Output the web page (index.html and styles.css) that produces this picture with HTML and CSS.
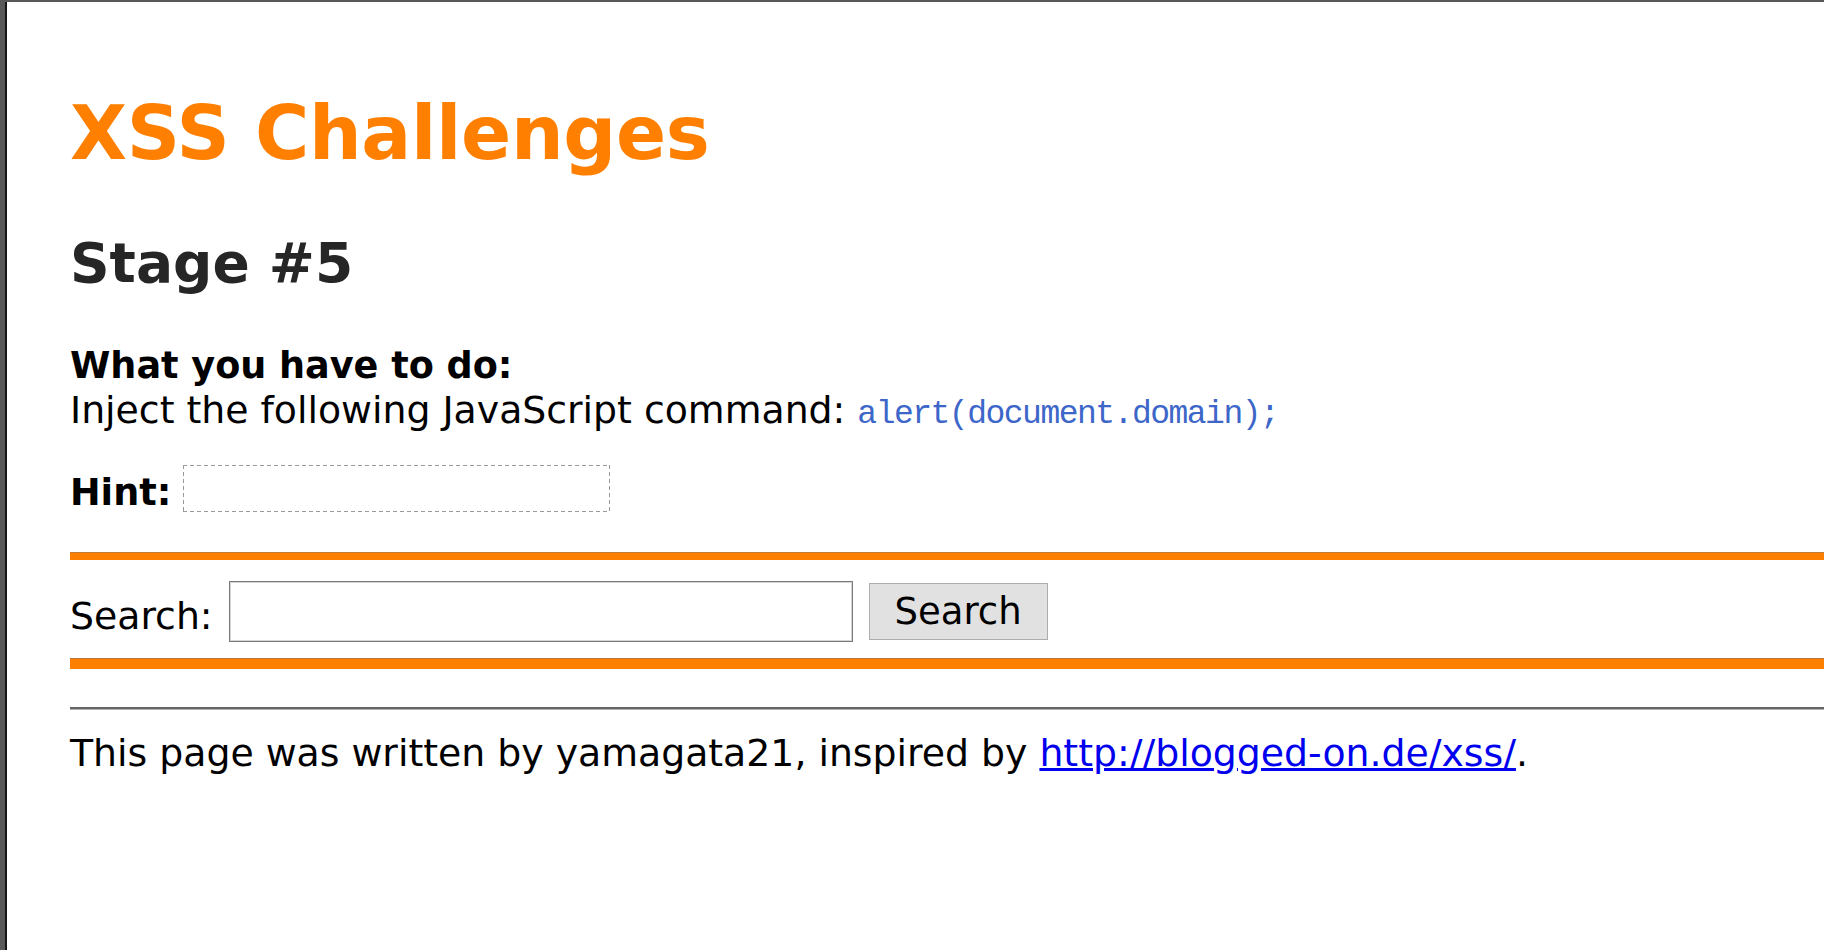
FILE: index.html
```html
<!DOCTYPE html>
<html lang="en">
<head>
<meta charset="utf-8">
<title>XSS Challenges - Stage #5</title>
<link rel="stylesheet" href="styles.css">
</head>
<body>
<div class="frame">
  <div class="page">
    <h1 class="title">XSS Challenges</h1>
    <h2 class="stage">Stage #5</h2>
    <div class="task">
      <div class="task-head">What you have to do:</div>
      <div class="task-body">Inject the following JavaScript command: <code class="cmd">alert(document.domain);</code></div>
    </div>
    <div class="hint-row">
      <span class="hint-label">Hint:</span>
      <span class="hint-box"></span>
    </div>
    <div class="rule-top"></div>
    <form class="search-row">
      <label class="search-label" for="q">Search:</label>
      <input class="search-input" id="q" type="text">
      <button class="search-btn" type="button">Search</button>
    </form>
    <div class="rule-bottom"></div>
    <div class="hr"></div>
    <p class="footer">This page was written by yamagata21, inspired by <a class="link" href="#">http://blogged-on.de/xss/</a>.</p>
  </div>
</div>
</body>
</html>
```
FILE: styles.css
```css
html, body {
  margin: 0;
  padding: 0;
  background: #ffffff;
}

body {
  font-family: "DejaVu Sans", Verdana, sans-serif;
  font-size: 37.8px;
  color: #000;
  overflow: hidden;
  height: 950px;
}

.frame {
  border-top: 2px solid #585858;
  border-left: 5px solid #585858;
  height: 950px;
  box-sizing: border-box;
}

.page {
  display: flow-root;
  border-left: 2px solid #161616;
  padding-left: 63px;
  height: 100%;
  box-sizing: border-box;
}

.title {
  margin: 88px 0 0;
  font-size: 74px;
  line-height: 86px;
  font-weight: bold;
  color: #ff7f00;
  letter-spacing: -0.3px;
}

.stage {
  margin: 55px 0 0;
  font-size: 55px;
  line-height: 64px;
  font-weight: bold;
  color: #262626;
}

.task {
  margin-top: 48px;
  line-height: 45px;
}

.task-head {
  font-weight: bold;
  font-size: 36.6px;
}

.cmd {
  font-family: "Liberation Mono", "DejaVu Sans Mono", monospace;
  font-size: 33px;
  letter-spacing: -1.5px;
  color: #3d66c9;
}

.hint-row {
  margin-top: 28px;
  display: flex;
  align-items: flex-start;
  gap: 12px;
}

.hint-label {
  font-weight: bold;
  font-size: 36.6px;
  line-height: 45px;
  margin-top: 5px;
}

.hint-box {
  width: 427px;
  height: 47px;
  box-sizing: border-box;
  background:
    linear-gradient(to right, #9a9a9a 4px, transparent 4px) left top / 7px 1px repeat-x,
    linear-gradient(to right, #9a9a9a 4px, transparent 4px) left bottom / 7px 1px repeat-x,
    linear-gradient(to bottom, #9a9a9a 4px, transparent 4px) left top / 1px 7px repeat-y,
    linear-gradient(to bottom, #9a9a9a 4px, transparent 4px) right top / 1px 7px repeat-y;
}

.rule-top {
  margin-top: 37px;
  height: 8px;
  box-sizing: border-box;
  border-top: 1px solid #c07a3a;
  background: #ff7f00;
}

.search-row {
  margin: 21px 0 0;
  display: flex;
  align-items: center;
  height: 61px;
}

.search-label {
  line-height: 45px;
  padding-top: 10px;
  margin-right: 16px;
}

.search-input {
  width: 624px;
  height: 61px;
  box-sizing: border-box;
  border: 1px solid #7a7a7a;
  box-shadow: inset 0 0 0 1px #d4d4d4;
  margin: 0 16px 0 0;
  padding: 0;
  font: inherit;
  background: #fff;
}

.search-btn {
  width: 179px;
  height: 57px;
  box-sizing: border-box;
  border: 1px solid #adadad;
  background: #e1e1e1;
  font-family: "DejaVu Sans", Verdana, sans-serif;
  font-size: 37px;
  color: #000;
  padding: 0;
  margin: 0;
  border-radius: 0;
}

.rule-bottom {
  margin-top: 16px;
  height: 11px;
  box-sizing: border-box;
  border-top: 1px solid #b87640;
  background: #ff7f00;
}

.hr {
  margin-top: 38px;
  height: 3px;
  box-sizing: border-box;
  border-top: 2px solid #666;
  border-bottom: 1px solid #b0b0b0;
}

.footer {
  margin: 21px 0 0;
  line-height: 45px;
}

.link {
  color: #0000ee;
  text-decoration: underline;
}
```
